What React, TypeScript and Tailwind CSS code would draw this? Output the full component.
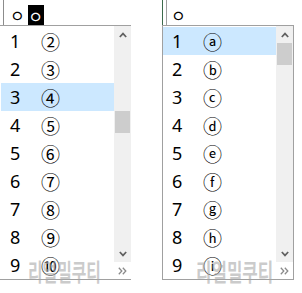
import React from 'react';

const LEFT_ITEMS = ['②', '③', '④', '⑤', '⑥', '⑦', '⑧', '⑨', '⑩'];
const RIGHT_ITEMS = ['ⓐ', 'ⓑ', 'ⓒ', 'ⓓ', 'ⓔ', 'ⓕ', 'ⓖ', 'ⓗ', 'ⓘ'];

const FONT = { fontFamily: '"Noto Sans", "Noto Sans CJK KR", sans-serif' };
const CJK = { fontFamily: '"Noto Sans CJK KR", sans-serif' };

function ChevronUp() {
  return (
    <svg width="8" height="6" viewBox="0 0 8 6">
      <polyline points="0.8,5 4,1.6 7.2,5" fill="none" stroke="#606060" strokeWidth="1.7" />
    </svg>
  );
}

function ChevronDown() {
  return (
    <svg width="8" height="6" viewBox="0 0 8 6">
      <polyline points="0.8,1 4,4.4 7.2,1" fill="none" stroke="#606060" strokeWidth="1.7" />
    </svg>
  );
}

function More() {
  return (
    <svg width="9" height="8" viewBox="0 0 9 8">
      <polyline points="0.8,0.8 3.8,4 0.8,7.2" fill="none" stroke="#8a8a8a" strokeWidth="1.3" />
      <polyline points="4.8,0.8 7.8,4 4.8,7.2" fill="none" stroke="#8a8a8a" strokeWidth="1.3" />
    </svg>
  );
}

function CandidateList({
  items,
  selected,
  thumbTop,
  sideBorders,
}: {
  items: string[];
  selected: number;
  thumbTop: string;
  sideBorders: boolean;
}) {
  return (
    <div
      className={`flex border-t border-b border-[#a0a0a0] ${
        sideBorders ? 'border-l border-r' : 'pl-px'
      }`}
    >
      <div className="w-[113px] pt-px">
        {items.map((c, i) => (
          <div
            key={c}
            className={`h-[28px] flex items-center ${i === selected ? 'bg-[#cce8ff]' : ''}`}
          >
            <span className="w-[40px] pl-[9px] text-[18px] leading-none text-black">{i + 1}</span>
            <span className="text-[19px] leading-none text-black" style={CJK}>
              {c}
            </span>
          </div>
        ))}
      </div>
      <div className="w-[17px] flex flex-col">
        <div className="bg-[#f0f0f0] flex flex-col flex-1">
          <div className="h-[17px] flex items-center justify-center">
            <ChevronUp />
          </div>
          <div className="flex-1">
            <div className={`${thumbTop} h-[22px] mx-px bg-[#cdcdcd]`} />
          </div>
          <div className="h-[17px] flex items-center justify-center">
            <ChevronDown />
          </div>
        </div>
        <div className="h-[17px] flex items-center justify-center bg-white">
          <More />
        </div>
      </div>
    </div>
  );
}

export default function App() {
  return (
    <div className="w-[302px] h-[293px] bg-white relative flex overflow-hidden" style={FONT}>
      {/* left: circled numbers */}
      <div className="w-[131px]">
        <div className="h-[25px] flex">
          <div className="ml-[3px] w-px bg-[#8c8c8c]" />
          <div className="ml-[6px] flex items-center pt-[5px] text-[16px] text-black" style={CJK}>
            ㅇ
          </div>
          <div
            className="ml-[3px] mt-[5px] w-[16px] h-[20px] bg-black text-white flex items-center justify-center text-[16px] pt-[1px]"
            style={CJK}
          >
            ㅇ
          </div>
        </div>
        <CandidateList items={LEFT_ITEMS} selected={2} thumbTop="mt-[68px]" sideBorders={false} />
      </div>

      {/* right: circled letters */}
      <div className="ml-[31px] w-[132px]">
        <div className="h-[25px] flex">
          <div className="w-px bg-[#3d6b4c]" />
          <div className="ml-[3px] w-px bg-[#a0a0a0]" />
          <div className="ml-[4px] flex items-center pt-[5px] text-[16px] text-black" style={CJK}>
            ㅇ
          </div>
        </div>
        <CandidateList items={RIGHT_ITEMS} selected={0} thumbTop="mt-0" sideBorders />
      </div>

      {/* watermarks */}
      <div
        className="absolute left-[28px] top-[259px] text-[24px] font-bold leading-none text-[#a8a8a8]/60 origin-left scale-x-[0.66] whitespace-nowrap"
        style={CJK}
      >
        리얼밀쿠티
      </div>
      <div
        className="absolute left-[196px] top-[259px] text-[24px] font-bold leading-none text-[#a8a8a8]/60 origin-left scale-x-[0.7] whitespace-nowrap"
        style={CJK}
      >
        리얼밀쿠티
      </div>
    </div>
  );
}
